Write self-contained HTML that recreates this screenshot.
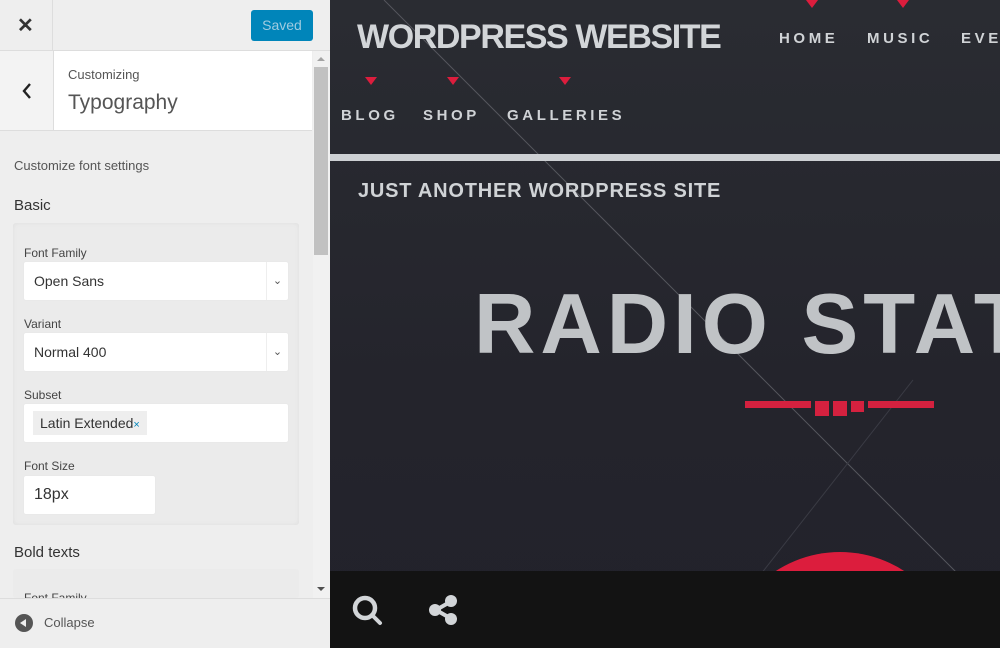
<!DOCTYPE html>
<html><head><meta charset="utf-8"><style>
*{margin:0;padding:0;box-sizing:border-box}
html,body{width:1000px;height:648px;overflow:hidden}
body{position:relative;font-family:"Liberation Sans",sans-serif;background:#eee}
.abs{position:absolute}
#left{left:0;top:0;width:330px;height:648px;background:#eee;overflow:hidden}
#right{left:330px;top:0;width:670px;height:648px;overflow:hidden;background:linear-gradient(#2a2c32,#24242c 60%,#22222b)}
.lbl{position:absolute;left:24px;font-size:12px;color:#444}
.sel{position:absolute;left:24px;width:264px;height:38px;background:#fff;border-radius:2px;font-size:14px;color:#333;padding:11px 10px;box-shadow:0 0 1px #ddd}
.sel .ar{position:absolute;right:0;top:0;width:22px;height:38px;border-left:1px solid #eee;font-size:11px;color:#555;text-align:center;line-height:38px}
.nav{position:absolute;font-size:15px;font-weight:bold;letter-spacing:3.6px;color:#d0d3d6;white-space:nowrap}
.tri{position:absolute;width:0;height:0;border-left:6px solid transparent;border-right:6px solid transparent;border-top:8px solid #dc1d3d}
</style></head><body>
<div id="left" class="abs">
  <div class="abs" style="left:0;top:0;width:330px;height:51px;border-bottom:1px solid #ddd"></div>
  <div class="abs" style="left:52px;top:0;width:1px;height:51px;background:#ddd"></div>
  <div class="abs" style="left:17px;top:13px;font-size:20px;color:#333;font-weight:bold">✕</div>
  <div class="abs" style="left:251px;top:10px;width:62px;height:31px;background:#0085ba;border-radius:3px;color:#9fcbe0;font-size:14px;text-align:center;line-height:31px">Saved</div>
  <div class="abs" style="left:0;top:51px;width:53px;height:80px;background:#f3f3f3;border-bottom:1px solid #ddd"></div>
  <div class="abs" style="left:53px;top:51px;width:259px;height:80px;background:#fff;border-bottom:1px solid #ddd;border-left:1px solid #ddd"></div>
  <svg class="abs" style="left:20px;top:82px" width="14" height="18"><path d="M10 2 L4 9 L10 16" stroke="#222" stroke-width="2.4" fill="none"/></svg>
  <div class="abs" style="left:68px;top:67px;font-size:13px;color:#555">Customizing</div>
  <div class="abs" style="left:68px;top:91px;font-size:21px;color:#555;font-weight:300">Typography</div>
  <div class="abs" style="left:313px;top:51px;width:17px;height:547px;background:#f1f1f1"></div>
  <div class="abs" style="left:314px;top:67px;width:14px;height:188px;background:#c1c1c1"></div>
  <div class="abs" style="left:317px;top:57px;border-left:4px solid transparent;border-right:4px solid transparent;border-bottom:4px solid #a3a3a3;width:0"></div>
  <div class="abs" style="left:317px;top:587px;border-left:4px solid transparent;border-right:4px solid transparent;border-top:4px solid #505050;width:0"></div>
  <div class="abs" style="left:14px;top:158px;font-size:13px;color:#555">Customize font settings</div>
  <div class="abs" style="left:14px;top:197px;font-size:15px;color:#333">Basic</div>
  <div class="abs" style="left:13px;top:223px;width:286px;height:302px;background:#ebebeb;border-radius:3px;box-shadow:inset 0 0 4px #ddd"></div>
  <div class="lbl" style="top:246px">Font Family</div>
  <div class="sel" style="top:262px">Open Sans<div class="ar">⌄</div></div>
  <div class="lbl" style="top:317px">Variant</div>
  <div class="sel" style="top:333px">Normal 400<div class="ar">⌄</div></div>
  <div class="lbl" style="top:388px">Subset</div>
  <div class="sel" style="top:404px;padding:7px 9px"><span style="background:#eee;padding:4px 7px;display:inline-block;font-size:14px">Latin Extended<span style="color:#0085ba;font-size:11px">×</span></span></div>
  <div class="lbl" style="top:459px">Font Size</div>
  <div class="sel" style="top:476px;width:131px;font-size:16px;padding:10px 10px">18px</div>
  <div class="abs" style="left:14px;top:544px;font-size:15px;color:#333">Bold texts</div>
  <div class="abs" style="left:13px;top:569px;width:286px;height:29px;background:#ebebeb;border-radius:3px;overflow:hidden"><div style="position:absolute;left:11px;top:22px;font-size:12px;color:#444">Font Family</div></div>
  <div class="abs" style="left:0;top:598px;width:330px;height:50px;background:#eee;border-top:1px solid #ddd"></div>
  <div class="abs" style="left:15px;top:614px;width:18px;height:18px;border-radius:50%;background:#555"></div>
  <div class="abs" style="left:20px;top:619px;border-top:4px solid transparent;border-bottom:4px solid transparent;border-right:6px solid #eee;width:0"></div>
  <div class="abs" style="left:44px;top:615px;font-size:13px;color:#555">Collapse</div>
</div>
<div id="right" class="abs">
  <svg class="abs" style="left:0;top:0" width="670" height="648">
    <line x1="54" y1="0" x2="626" y2="572" stroke="#55565d" stroke-width="1"/>
    <line x1="583" y1="380" x2="391" y2="625" stroke="#3a3b44" stroke-width="1"/>
    <circle cx="510" cy="670" r="118" fill="#dc1d3d"/>
    <rect x="415" y="401" width="66" height="7" fill="#d4213f"/>
    <rect x="538" y="401" width="66" height="7" fill="#d4213f"/>
    <rect x="485" y="401" width="14" height="15" fill="#d4213f"/>
    <rect x="503" y="401" width="14" height="15" fill="#d4213f"/>
    <rect x="521" y="401" width="13" height="11" fill="#d4213f"/>
  </svg>
  <div class="abs" style="left:27px;top:18px;font-size:34px;font-weight:bold;letter-spacing:-1.4px;color:#d2d5d8;white-space:nowrap">WORDPRESS WEBSITE</div>
  <div class="tri" style="left:476px;top:0"></div>
  <div class="tri" style="left:567px;top:0"></div>
  <div class="nav" style="left:449px;top:30px">HOME</div>
  <div class="nav" style="left:537px;top:30px">MUSIC</div>
  <div class="nav" style="left:631px;top:30px">EVE</div>
  <div class="tri" style="left:35px;top:77px"></div>
  <div class="tri" style="left:117px;top:77px"></div>
  <div class="tri" style="left:229px;top:77px"></div>
  <div class="nav" style="left:11px;top:107px">BLOG</div>
  <div class="nav" style="left:93px;top:107px">SHOP</div>
  <div class="nav" style="left:177px;top:107px">GALLERIES</div>
  <div class="abs" style="left:0;top:154px;width:670px;height:7px;background:#cdd0d3"></div>
  <div class="abs" style="left:28px;top:180px;font-size:20px;font-weight:bold;letter-spacing:0.8px;color:#d0d3d6;white-space:nowrap">JUST ANOTHER WORDPRESS SITE</div>
  <div class="abs" style="left:144px;top:276px;font-size:85px;font-weight:bold;letter-spacing:5px;color:#c0c3c6;white-space:nowrap">RADIO STAT</div>
  <div class="abs" style="left:0;top:571px;width:670px;height:77px;background:#131313"></div>
  <svg class="abs" style="left:20px;top:594px" width="34" height="34"><circle cx="15" cy="14" r="10" stroke="#d2d5d8" stroke-width="4.5" fill="none"/><line x1="22" y1="21" x2="30" y2="29" stroke="#d2d5d8" stroke-width="4" stroke-linecap="round"/></svg>
  <svg class="abs" style="left:98px;top:594px" width="32" height="32"><line x1="8" y1="16" x2="22" y2="8" stroke="#d2d5d8" stroke-width="4"/><line x1="8" y1="16" x2="22" y2="24" stroke="#d2d5d8" stroke-width="4"/><circle cx="7" cy="16" r="6" fill="#d2d5d8"/><circle cx="23" cy="7" r="6" fill="#d2d5d8"/><circle cx="23" cy="25" r="6" fill="#d2d5d8"/></svg>
</div>
</body></html>
